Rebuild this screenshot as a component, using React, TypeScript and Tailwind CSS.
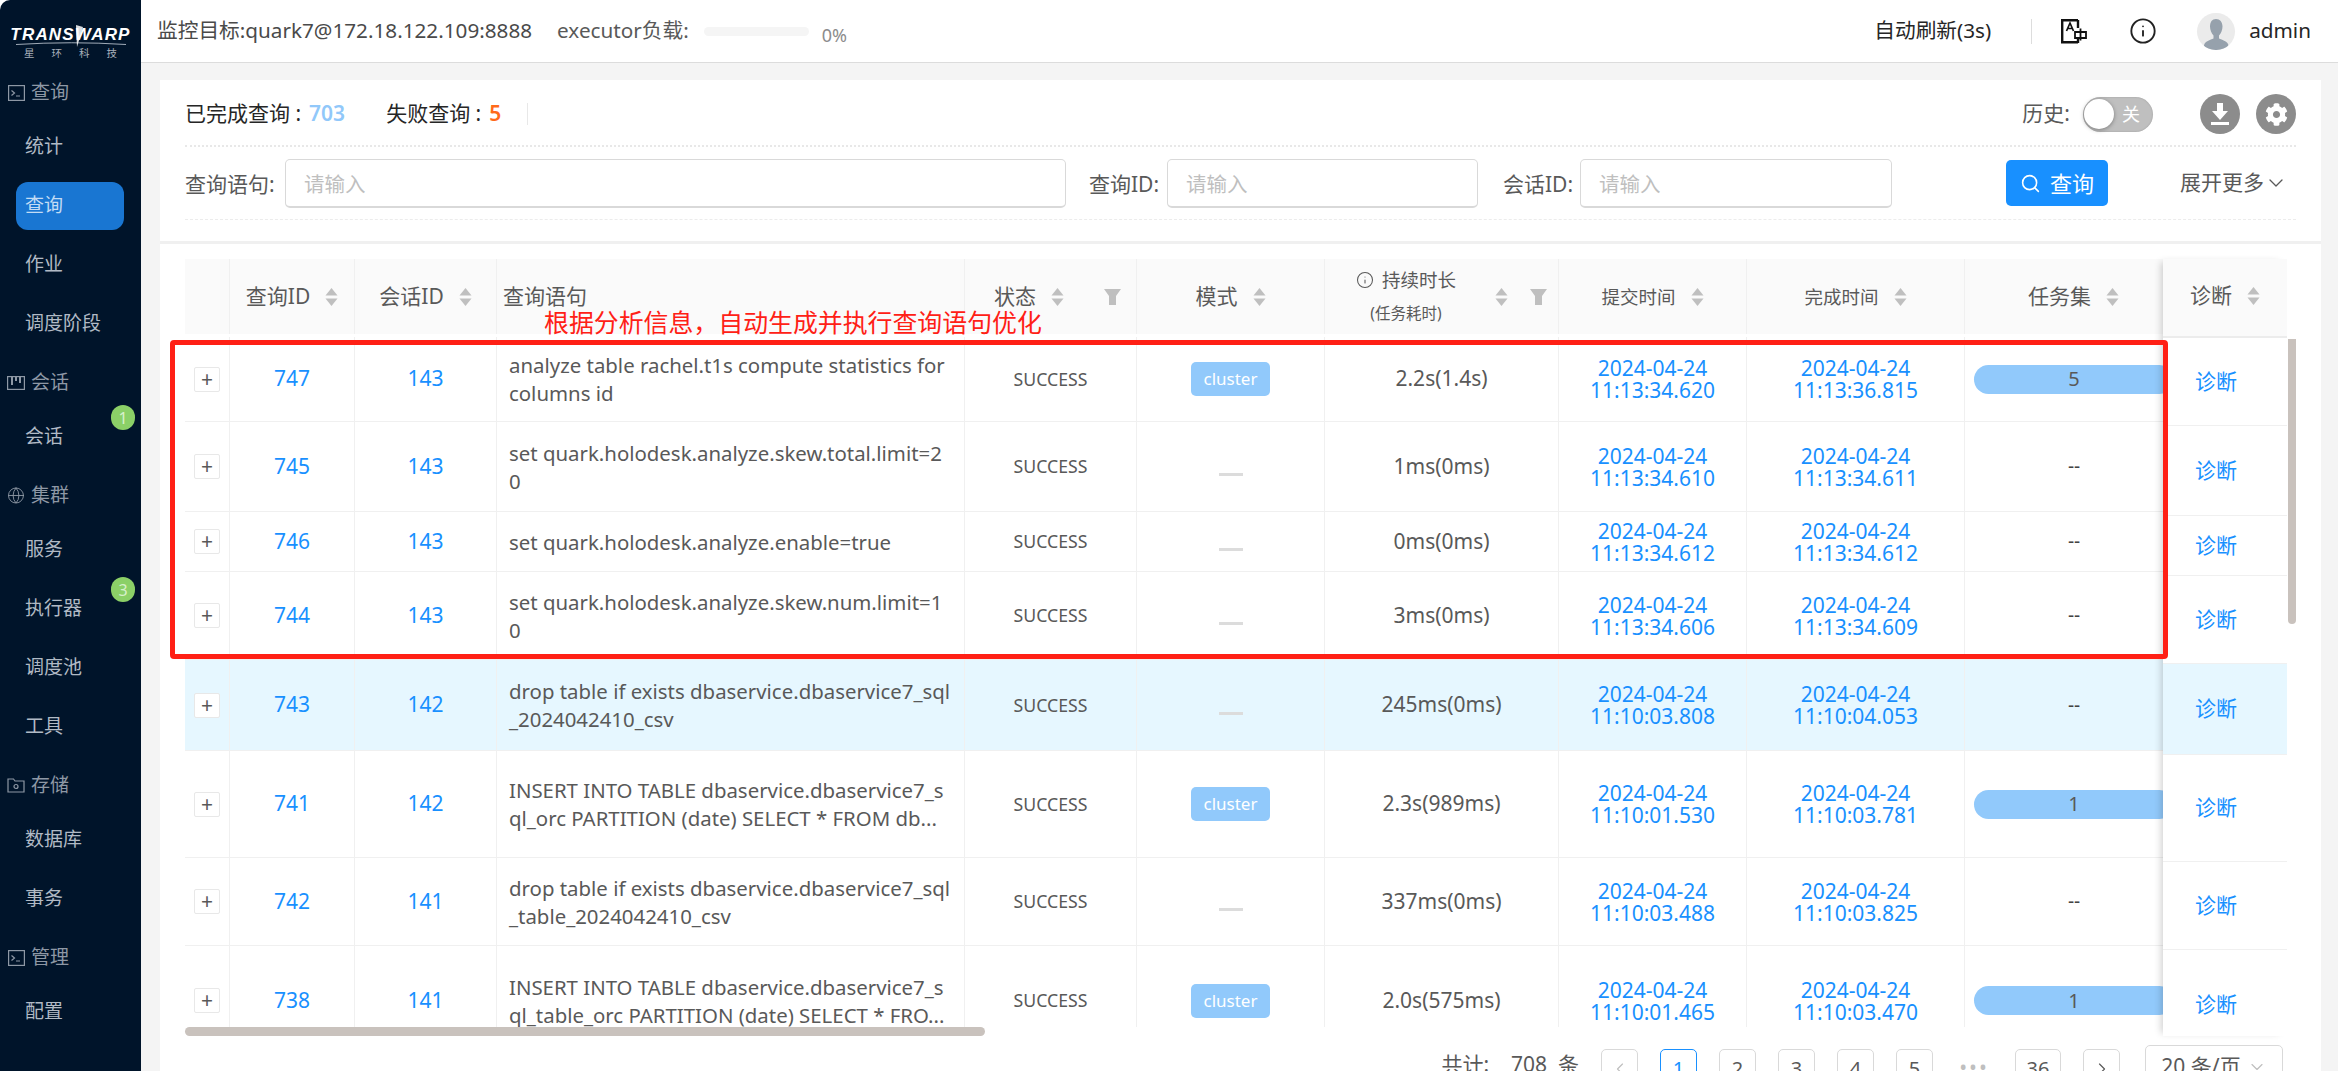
import { Globe, Info, Search, ChevronDown, ChevronLeft, ChevronRight } from "lucide-react";
import { FaCog } from "react-icons/fa";

const fontStack = "font-['Noto_Sans','Noto_Sans_CJK_SC',sans-serif]";

const TerminalBoxIcon = () => (
  <svg width="17" height="16" viewBox="0 0 17 16" fill="none" stroke="currentColor" strokeWidth="1.2">
    <rect x="0.6" y="0.6" width="15.8" height="14.8" />
    <path d="M3.500 5.500L6.500 8l-3 2.500M8 11h4" />
  </svg>
);

const KanbanIcon = () => (
  <svg width="18" height="14" viewBox="0 0 18 14" fill="none" stroke="currentColor" strokeWidth="1.2">
    <rect x="0.6" y="0.6" width="16.8" height="12.8" />
    <path d="M5 1v8M9 1v4M13 1v6" strokeWidth="2" />
  </svg>
);

const StorageIcon = () => (
  <svg width="18" height="15" viewBox="0 0 18 15" fill="none" stroke="currentColor" strokeWidth="1.2">
    <path d="M1 2v12h16V3H8L6.500 1H1z" />
    <circle cx="9" cy="8.500" r="2" />
  </svg>
);

const nav = [
  { label: "查询", icon: <TerminalBoxIcon />, items: [{ label: "统计" }, { label: "查询", active: true }, { label: "作业" }, { label: "调度阶段" }] },
  { label: "会话", icon: <KanbanIcon />, items: [{ label: "会话", badge: "1" }] },
  { label: "集群", icon: <Globe size={19} strokeWidth={1.2} />, items: [{ label: "服务" }, { label: "执行器", badge: "3" }, { label: "调度池" }, { label: "工具" }] },
  { label: "存储", icon: <StorageIcon />, items: [{ label: "数据库" }, { label: "事务" }] },
  { label: "管理", icon: <TerminalBoxIcon />, items: [{ label: "配置" }] },
];

const rows = [
  { id: "747", session: "143", sql: ["analyze table rachel.t1s compute statistics for", "columns id"], cluster: true, dur: "2.2s(1.4s)", submit: "11:13:34.620", finish: "11:13:36.815", tasks: "5", h: "h-[88px] pt-[3px]", fixedH: "h-[88px]" },
  { id: "745", session: "143", sql: ["set quark.holodesk.analyze.skew.total.limit=2", "0"], cluster: false, dur: "1ms(0ms)", submit: "11:13:34.610", finish: "11:13:34.611", tasks: "", h: "h-[90px]", fixedH: "h-[90px]" },
  { id: "746", session: "143", sql: ["set quark.holodesk.analyze.enable=true"], cluster: false, dur: "0ms(0ms)", submit: "11:13:34.612", finish: "11:13:34.612", tasks: "", h: "h-[60px]", fixedH: "h-[60px]" },
  { id: "744", session: "143", sql: ["set quark.holodesk.analyze.skew.num.limit=1", "0"], cluster: false, dur: "3ms(0ms)", submit: "11:13:34.606", finish: "11:13:34.609", tasks: "", h: "h-[88px]", fixedH: "h-[88px]" },
  { id: "743", session: "142", sql: ["drop table if exists dbaservice.dbaservice7_sql", "_2024042410_csv"], cluster: false, dur: "245ms(0ms)", submit: "11:10:03.808", finish: "11:10:04.053", tasks: "", h: "h-[91px]", fixedH: "h-[91px]", active: true },
  { id: "741", session: "142", sql: ["INSERT INTO TABLE dbaservice.dbaservice7_s", "ql_orc PARTITION (date) SELECT * FROM db..."], cluster: true, dur: "2.3s(989ms)", submit: "11:10:01.530", finish: "11:10:03.781", tasks: "1", h: "h-[107px]", fixedH: "h-[107px]" },
  { id: "742", session: "141", sql: ["drop table if exists dbaservice.dbaservice7_sql", "_table_2024042410_csv"], cluster: false, dur: "337ms(0ms)", submit: "11:10:03.488", finish: "11:10:03.825", tasks: "", h: "h-[88px]", fixedH: "h-[88px]" },
  { id: "738", session: "141", sql: ["INSERT INTO TABLE dbaservice.dbaservice7_s", "ql_table_orc PARTITION (date) SELECT * FRO..."], cluster: true, dur: "2.0s(575ms)", submit: "11:10:01.465", finish: "11:10:03.470", tasks: "1", h: "h-[110px]", fixedH: "h-[110px]" },
];

const gridCols = "grid grid-cols-[45px_125px_142px_468px_172px_188px_234px_188px_218px_218px] w-[1998px]";
const cellBorder = "border-r border-[#f0f0f0]";

const SortIcon = () => (
  <svg width="13" height="18" viewBox="0 0 13 18" className="shrink-0" fill="#bfbfbf">
    <path d="M6.500 0L12.500 7.500H0.500z" />
    <path d="M6.500 18L0.500 10.500H12.500z" />
  </svg>
);

const FilterIcon = () => (
  <svg width="17" height="16" viewBox="0 0 17 16" className="shrink-0" fill="#bfbfbf">
    <path d="M0 0h17l-5 7v9H5V7z" />
  </svg>
);

const Sidebar = () => (
  <aside className="w-[141px] shrink-0 h-full bg-[#00142a] rounded-tl-[10px] flex flex-col">
    <div className="relative h-[68px] shrink-0 pt-[25px] flex flex-col items-center">
      <div className="font-['Liberation_Sans',sans-serif] italic font-black text-white text-[17px] leading-[20px] tracking-[0.07em]">TRANSWARP</div>
      <svg width="118" height="26" viewBox="0 0 118 26" className="absolute left-[12px] top-[25px]" fill="none">
        <path d="M4 19.500Q60 16 114 19.500" stroke="#c9d2dc" strokeWidth="0.8" />
        <path d="M64 0L71 2l-6 20z" fill="#ffffff" opacity="0.85" />
      </svg>
      <div className="flex gap-[17px] text-[10.5px] leading-[12px] mt-[2px] text-[#a8b0ba]">
        <span>星</span>
        <span>环</span>
        <span>科</span>
        <span>技</span>
      </div>
    </div>
    <nav className="flex flex-col">
      {nav.map((group) => (
        <div key={group.label} className="flex flex-col">
          <div className="h-[49px] flex items-center pl-[7px] gap-[6px] text-[#8e98a5] text-[19px]">
            <span className="w-[18px] flex justify-center">{group.icon}</span>
            <span>{group.label}</span>
          </div>
          {group.items.map((item) => (
            <div key={item.label + group.label} className="relative h-[59px] flex items-center pl-[16px]">
              <div className={`w-[108px] h-[48px] rounded-[12px] flex items-center pl-[9px] text-[19px] ${item.active ? "bg-[#1976d2] text-[#c3dcf5]" : "text-[#b1bac5]"}`}>
                {item.label}
              </div>
              {item.badge && (
                <span className="absolute left-[111px] top-[-2px] w-[24px] h-[25px] rounded-full bg-[#8bd067] text-[#d8f0cc] text-[16px] flex items-center justify-center">
                  {item.badge}
                </span>
              )}
            </div>
          ))}
          <div className="h-[5px]" />
        </div>
      ))}
    </nav>
  </aside>
);

const Header = () => (
  <header className="h-[63px] shrink-0 bg-white border-b border-[#dcdcdc] flex items-center pl-[16px] pr-[27px] text-[20.7px] text-[#595959]">
    <span className="text-[#4a4a4a]">监控目标:quark7@172.18.122.109:8888</span>
    <span className="ml-[25px]">executor负载:</span>
    <div className="ml-[15px] w-[105px] h-[9px] rounded-full bg-[#f5f5f5]" />
    <span className="ml-[13px] mt-[8px] text-[18px] text-[#8c8c8c]">0%</span>
    <span className="ml-auto text-[#262626]">自动刷新(3s)</span>
    <div className="ml-[40px] w-[1px] h-[25px] bg-[#dddddd]" />
    <svg width="27" height="25" viewBox="0 0 27 25" className="ml-[29px]" fill="none" stroke="#111111">
      <path d="M17 1.200H1.200v22H17" strokeWidth="2.400" />
      <path d="M17 1v8M17 19v5" strokeWidth="2.400" />
      <path d="M5.500 12L9 4l3.500 8M7 9.500h4" strokeWidth="1.700" />
      <path d="M14 13h11v6H14zM19.500 9.500v12" strokeWidth="1.800" />
    </svg>
    <Info size={28} strokeWidth={1.6} color="#222222" className="ml-[41px]" />
    <div className="ml-[40px] w-[38px] h-[37px] rounded-full bg-[#ebebeb] overflow-hidden flex justify-center">
      <svg width="30" height="37" viewBox="0 0 30 37" fill="#96a1ac">
        <path d="M15 6c4 0 6.500 3 6.500 7.500 0 3.500-1.500 7-3.500 9v3c3 1.500 9 2.500 9.500 7 0 2-1 4.500-2 4.500H5c-1 0-2-2.500-2-4.500.5-4.500 6.500-5.500 9.500-7v-3c-2-2-3.500-5.500-3.500-9C9 9 11 6 15 6z" />
      </svg>
    </div>
    <span className="ml-[14px] text-[#262626]">admin</span>
  </header>
);

const TextField = ({ label, width, labelWidth, className }: { label: string; width: string; labelWidth: string; className?: string }) => (
  <div className={`flex items-center ${className ?? ""}`}>
    <span className={`${labelWidth} pt-[3px] text-[21px] text-[#595959] whitespace-nowrap`}>{label}</span>
    <div className={`h-[49px] ${width} bg-white border border-[#d9d9d9] border-b-2 rounded-[5px] flex items-center pl-[18px] pt-[4px] text-[20.5px] text-[#bfbfbf]`}>
      请输入
    </div>
  </div>
);

const Toolbar = () => (
  <div className="px-[25px] shrink-0">
    <div className="h-[67px] pt-[3px] border-b-2 border-dotted border-[#e8e8e8] flex items-center text-[21px] text-[#262626]">
      <span>已完成查询 : </span>
      <span className="ml-[8px] font-semibold text-[#91c8fa]">703</span>
      <span className="ml-[41px]">失败查询 : </span>
      <span className="ml-[8px] font-semibold text-[#ff6a1a]">5</span>
      <div className="ml-[26px] w-[1px] h-[22px] bg-[#e8e8e8]" />
      <span className="ml-auto text-[#595959]">历史:</span>
      <div className="ml-[13px] w-[70px] h-[35px] rounded-full bg-[#bfbfbf] flex items-center pl-[1px] shadow-[inset_0_0_2px_rgba(0,0,0,0.2)]">
        <div className="w-[30px] h-[30px] rounded-full bg-white shadow-[0_1px_4px_rgba(0,0,0,0.35)]" />
        <span className="ml-[8px] text-white text-[18px]">关</span>
      </div>
      <div className="ml-[47px] w-[40px] h-[40px] rounded-full bg-[#8c8c8c] flex items-center justify-center">
        <svg width="20" height="22" viewBox="0 0 20 22" fill="white">
          <path d="M7 0h6v8h5l-8 9-8-9h5z" />
          <rect x="1" y="19" width="18" height="3" />
        </svg>
      </div>
      <div className="ml-[16px] w-[40px] h-[40px] rounded-full bg-[#8c8c8c] flex items-center justify-center">
        <FaCog size={23} color="white" />
      </div>
    </div>
    <div className="h-[73px] border-b border-dashed border-[#ececec] flex items-center">
      <TextField label="查询语句:" labelWidth="w-[100px]" width="w-[781px]" />
      <TextField label="查询ID:" labelWidth="w-[78px]" width="w-[311px]" className="ml-[23px]" />
      <TextField label="会话ID:" labelWidth="w-[77px]" width="w-[312px]" className="ml-[25px]" />
      <button className="ml-[114px] w-[102px] h-[46px] rounded-[5px] bg-[#1890ff] text-white text-[22px] flex items-center justify-center gap-[9px]">
        <Search size={21} strokeWidth={1.8} />
        查询
      </button>
      <span className="ml-auto mr-[8px] flex items-center text-[21px] text-[#595959]">
        展开更多
        <ChevronDown size={24} strokeWidth={1.3} />
      </span>
    </div>
  </div>
);

const TableHeader = () => (
  <div className={`${gridCols} h-[75px] bg-[#fafafa] text-[#595959] text-[21px]`}>
    <div className={cellBorder} />
    <div className={`${cellBorder} flex items-center justify-center gap-[15px]`}>查询ID<SortIcon /></div>
    <div className={`${cellBorder} flex items-center justify-center gap-[15px]`}>会话ID<SortIcon /></div>
    <div className={`${cellBorder} flex items-center pl-[6px]`}>查询语句</div>
    <div className={`${cellBorder} flex items-center pl-[29px]`}>
      状态
      <span className="ml-[15px]"><SortIcon /></span>
      <span className="ml-[40px]"><FilterIcon /></span>
    </div>
    <div className={`${cellBorder} flex items-center justify-center gap-[15px]`}>模式<SortIcon /></div>
    <div className={`${cellBorder} flex items-center pl-[30px]`}>
      <div className="w-[102px] flex flex-col items-center text-[18.5px] leading-[24px]">
        <span className="flex items-center gap-[8px] whitespace-nowrap"><Info size={18} strokeWidth={1.4} />持续时长</span>
        <span className="text-[15.5px] mt-[9px] whitespace-nowrap">(任务耗时)</span>
      </div>
      <span className="ml-[38px]"><SortIcon /></span>
      <span className="ml-[22px]"><FilterIcon /></span>
    </div>
    <div className={`${cellBorder} flex items-center justify-center gap-[15px] text-[18.5px]`}>提交时间<SortIcon /></div>
    <div className={`${cellBorder} flex items-center justify-center gap-[15px] text-[18.5px]`}>完成时间<SortIcon /></div>
    <div className={`${cellBorder} flex items-center justify-center gap-[15px]`}>任务集<SortIcon /></div>
  </div>
);

const TableRow = ({ row }: { row: (typeof rows)[number] }) => (
  <div className={`${gridCols} ${row.h} ${row.active ? "bg-[#e6f7ff]" : "bg-white"} border-b border-[#f0f0f0] text-[#595959]`}>
    <div className={`${cellBorder} flex items-center pl-[9px]`}>
      <span className="w-[26px] h-[25px] bg-white border border-[#e8e8e8] rounded-[2px] flex items-center justify-center text-[21px] leading-none text-[#595959]">+</span>
    </div>
    <div className={`${cellBorder} flex items-center justify-center text-[21px] text-[#1890ff]`}>{row.id}</div>
    <div className={`${cellBorder} flex items-center justify-center text-[21px] text-[#1890ff]`}>{row.session}</div>
    <div className={`${cellBorder} flex flex-col justify-center pl-[12px] text-[20.4px] leading-[28px] whitespace-nowrap`}>
      {row.sql.map((line) => (
        <span key={line}>{line}</span>
      ))}
    </div>
    <div className={`${cellBorder} flex items-center justify-center text-[17.7px]`}>SUCCESS</div>
    <div className={`${cellBorder} flex items-center justify-center`}>
      {row.cluster ? (
        <span className="w-[79px] h-[34px] rounded-[5px] bg-[#91c9fb] text-white text-[17px] flex items-center justify-center">cluster</span>
      ) : (
        <span className="w-[24px] h-[3px] mt-[16px] bg-[#dcdcdc]" />
      )}
    </div>
    <div className={`${cellBorder} flex items-center justify-center text-[21px]`}>{row.dur}</div>
    <div className={`${cellBorder} flex flex-col items-center justify-center text-[21px] leading-[22px] text-[#1890ff]`}>
      <span>2024-04-24</span>
      <span>{row.submit}</span>
    </div>
    <div className={`${cellBorder} flex flex-col items-center justify-center text-[21px] leading-[22px] text-[#1890ff]`}>
      <span>2024-04-24</span>
      <span>{row.finish}</span>
    </div>
    <div className="flex items-center pl-[9px]">
      {row.tasks ? (
        <span className="w-[200px] h-[29px] rounded-full bg-[#91c9fb] text-[20px] flex items-center justify-center">{row.tasks}</span>
      ) : (
        <span className="w-[200px] text-center text-[#444444] text-[19px]">--</span>
      )}
    </div>
  </div>
);

const Table = () => (
  <div className="mx-[25px] mt-[15px] flex items-start">
    <div className="w-[1978px] shrink-0">
      <div className="h-[768px] overflow-hidden">
        <TableHeader />
        {rows.map((row) => (
          <TableRow key={row.id} row={row} />
        ))}
      </div>
      <div className="h-[9px] w-[800px] rounded-full bg-[#c9c2bd]" />
    </div>
    <div className="w-[124px] h-[777px] shrink-0 overflow-hidden relative bg-white shadow-[-5px_0_7px_-3px_rgba(0,0,0,0.18)]">
      <div className="h-[79px] bg-[#fafafa] border-b-2 border-[#ececec] flex items-center justify-center gap-[15px] pb-[4px] text-[21px] text-[#595959]">
        诊断
        <SortIcon />
      </div>
      {rows.map((row) => (
        <div key={row.id} className={`${row.fixedH} ${row.active ? "bg-[#e6f7ff]" : "bg-white"} border-b border-[#f0f0f0] flex items-center justify-center pr-[18px] text-[21px] text-[#1890ff]`}>
          诊断
        </div>
      ))}
    </div>
    <div className="ml-[1px] w-[9px] h-[285px] mt-[80px] rounded-b-[5px] bg-[#c9c2bd]" />
  </div>
);

const PageButton = ({ children, active }: { children: React.ReactNode; active?: boolean }) => (
  <span className={`h-[40px] rounded-[5px] border flex items-center justify-center text-[20px] ${active ? "border-[#1890ff] text-[#1890ff]" : "border-[#d9d9d9] text-[#595959]"}`}>
    {children}
  </span>
);

const Pagination = () => (
  <div className="mt-[13px] pr-[38px] flex justify-end items-start gap-[22px] text-[#595959] text-[21px]">
    <span className="whitespace-nowrap">共计:&nbsp;&nbsp;&nbsp;&nbsp;708&nbsp;&nbsp;条</span>
    <div className="w-[37px]"><PageButton><ChevronLeft size={20} strokeWidth={1.4} color="#bfbfbf" /></PageButton></div>
    {["1", "2", "3", "4", "5"].map((p) => (
      <div key={p} className="w-[37px]">
        <PageButton active={p === "1"}>{p}</PageButton>
      </div>
    ))}
    <span className="w-[38px] text-center text-[#bfbfbf] tracking-[2px] leading-[36px]">•••</span>
    <div className="w-[46px]"><PageButton>36</PageButton></div>
    <div className="w-[37px]"><PageButton><ChevronRight size={20} strokeWidth={1.4} /></PageButton></div>
    <div className="w-[138px] h-[44px] -mt-[4px] ml-[3px] rounded-[5px] border border-[#d9d9d9] flex items-center justify-center gap-[6px]">
      20 条/页
      <ChevronDown size={20} strokeWidth={1.4} color="#bfbfbf" />
    </div>
  </div>
);

export default function App() {
  return (
    <div className={`relative w-[2338px] h-[1071px] overflow-hidden bg-white flex ${fontStack}`}>
      <Sidebar />
      <div className="flex-1 min-w-0 flex flex-col bg-[#f4f4f4]">
        <Header />
        <main className="flex-1 min-h-0 ml-[19px] mr-[17px] mt-[17px] bg-white overflow-hidden flex flex-col">
          <Toolbar />
          <div className="mt-[21px] h-[3px] bg-[#f0f0f0] shrink-0" />
          <Table />
          <Pagination />
        </main>
      </div>
      {/* red annotation drawn over the table */}
      <div className="absolute left-[170px] top-[340px] w-[1998px] h-[319px] border-[5px] border-[#ff2015] rounded-[4px] pointer-events-none" />
      <div className="absolute left-[544px] top-[305px] text-[24.9px] leading-[34px] text-[#ff2015] whitespace-nowrap">根据分析信息，自动生成并执行查询语句优化</div>
    </div>
  );
}
